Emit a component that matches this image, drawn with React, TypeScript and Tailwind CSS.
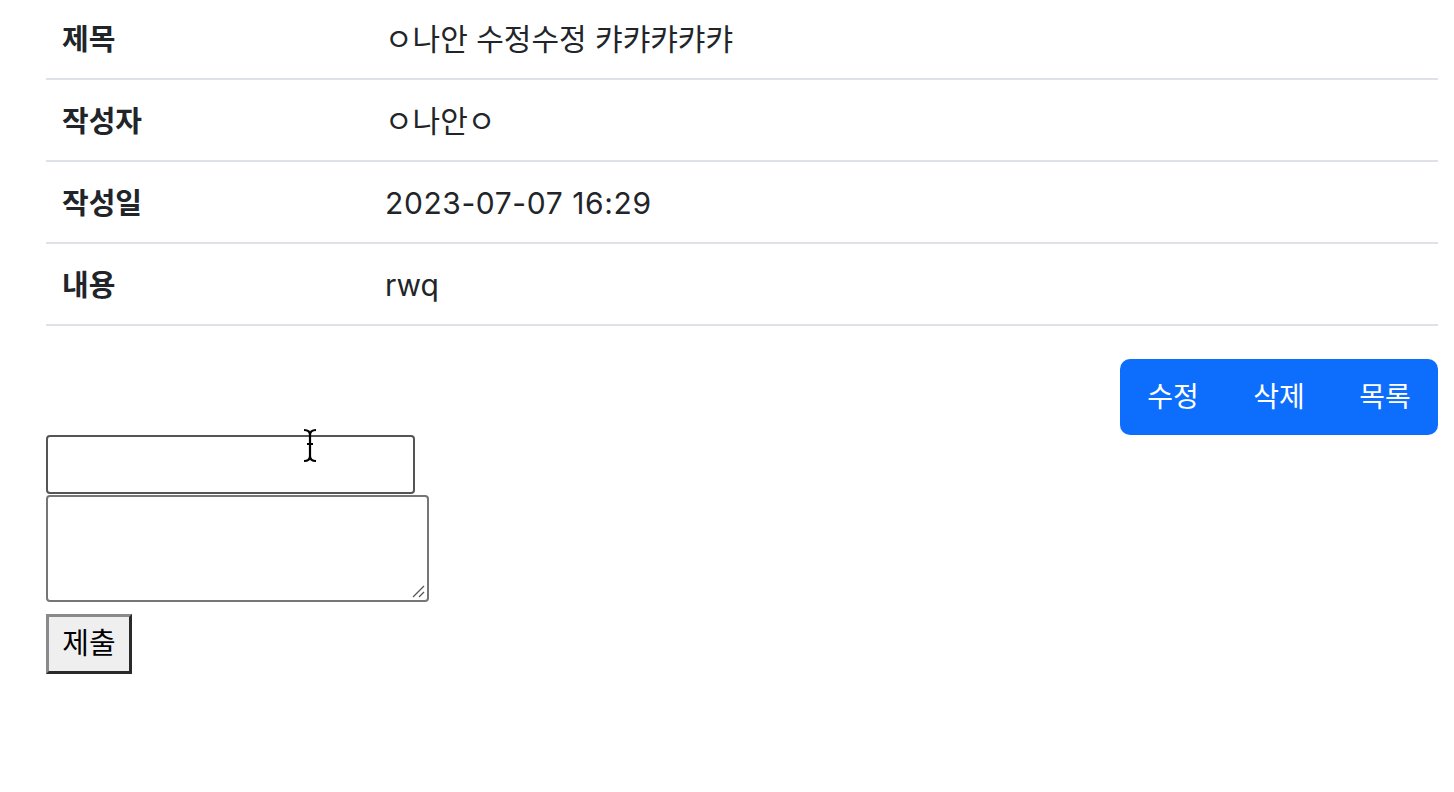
import React from "react";

const rows: [string, string][] = [
  ["제목", "ㅇ나안 수정수정 캬캬캬캬캬"],
  ["작성자", "ㅇ나안ㅇ"],
  ["작성일", "2023-07-07 16:29"],
  ["내용", "rwq"],
];

export default function App() {
  return (
    <div
      className="relative w-[1454px] h-[792px] overflow-hidden bg-white text-[#212529]"
      style={{ fontFamily: 'Inter, "Noto Sans CJK KR", "Noto Sans", sans-serif' }}
    >
      <div className="ml-[46px] mr-[16px] mt-[-2px]">
        {rows.map(([k, v]) => (
          <div key={k} className="flex h-[82px] items-center border-b-2 border-[#dee2e6] pt-[3px] text-[30px]">
            <div className="w-[339px] pl-[16px] text-[29px] font-bold">{k}</div>
            <div className={k === "작성일" ? "tracking-[0.6px]" : ""}>{v}</div>
          </div>
        ))}
        <div className="mt-[33px] flex justify-end">
          <div className="flex h-[76px] w-[318px] items-center rounded-[10px] bg-[#0d6efd] text-[28px] text-white">
            <div className="flex-1 text-center">수정</div>
            <div className="flex-1 text-center">삭제</div>
            <div className="flex-1 text-center">목록</div>
          </div>
        </div>
      </div>
      <div className="ml-[46px] flex flex-col items-start">
        <div className="h-[59px] w-[369px] rounded-[4px] border-2 border-[#555555]" />
        <div className="relative mt-[1px] h-[107px] w-[383px] rounded-[4px] border-2 border-[#767676]">
          <svg className="absolute right-[1px] bottom-[1px]" width="16" height="16" viewBox="0 0 16 16">
            <line x1="3" y1="14" x2="14" y2="3" stroke="#555" strokeWidth="1.2" />
            <line x1="9" y1="14" x2="14" y2="9" stroke="#555" strokeWidth="1.2" />
          </svg>
        </div>
        <button className="mt-[12px] h-[60px] w-[86px] border-[3px] border-t-[#8a8a8a] border-l-[#8a8a8a] border-r-[#2a2a2a] border-b-[#2a2a2a] bg-[#efefef] text-[29px] text-black">
          제출
        </button>
      </div>
      <svg className="absolute left-[301px] top-[428px]" width="18" height="36" viewBox="0 0 18 36">
        <path d="M3 2 Q9 2 9 7 L9 28 Q9 33 3 33 M15 2 Q9 2 9 7 M9 28 Q9 33 15 33 M6 16 L12 16" fill="none" stroke="#000" strokeWidth="2.2" />
      </svg>
    </div>
  );
}
